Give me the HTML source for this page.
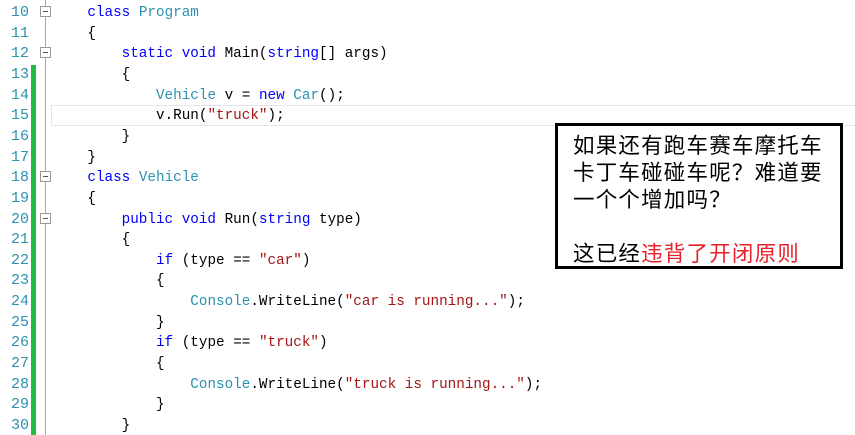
<!DOCTYPE html>
<html><head><meta charset="utf-8"><style>
body{margin:0;width:855px;height:435px;background:#fff;overflow:hidden;position:relative;font-family:"Liberation Mono",monospace;}
.ln{position:absolute;left:0;width:29px;text-align:right;color:#2b91af;font-size:15px;}
.code{position:absolute;left:53px;font-size:14.3px;white-space:pre;color:#000;}
.k{color:#0000ff}.t{color:#2b91af}.s{color:#a31515}
.fold{position:absolute;left:40px;width:9px;height:9px;border:1px solid #999;background:#fff;}
.fold:after{content:"";position:absolute;left:2px;top:4px;width:5px;height:1px;background:#555;}
</style></head><body>
<div style="position:absolute;left:31px;top:65px;width:5px;height:370px;background:#22bb44"></div>
<div style="position:absolute;left:45px;top:0;width:1px;height:435px;background:#aaa"></div>
<div style="position:absolute;left:51px;top:105px;width:804px;height:19px;border:1px solid #e4e4ec;border-right:none"></div>
<div id="g"></div>
<div style="position:absolute;left:555px;top:123px;width:282px;height:140px;border:3px solid #000;background:#fff;font-family:'Noto Sans CJK SC',sans-serif;font-size:21.5px;letter-spacing:1.2px;line-height:27px;padding:0;">
<div style="position:absolute;left:15px;top:5px;width:270px;white-space:nowrap">如果还有跑车赛车摩托车<br>卡丁车碰碰车呢？难道要<br>一个个增加吗？<br><br>这已经<span style="color:#e8202a">违背了开闭原则</span></div>
</div>
<script>
var L=[
[10,'<span class="k">class</span> <span class="t">Program</span>',1],
[11,'{'],
[12,'    <span class="k">static void</span> Main(<span class="k">string</span>[] args)',1],
[13,'    {'],
[14,'        <span class="t">Vehicle</span> v = <span class="k">new</span> <span class="t">Car</span>();'],
[15,'        v.Run(<span class="s">"truck"</span>);'],
[16,'    }'],
[17,'}'],
[18,'<span class="k">class</span> <span class="t">Vehicle</span>',1],
[19,'{'],
[20,'    <span class="k">public void</span> Run(<span class="k">string</span> type)',1],
[21,'    {'],
[22,'        <span class="k">if</span> (type == <span class="s">"car"</span>)'],
[23,'        {'],
[24,'            <span class="t">Console</span>.WriteLine(<span class="s">"car is running..."</span>);'],
[25,'        }'],
[26,'        <span class="k">if</span> (type == <span class="s">"truck"</span>)'],
[27,'        {'],
[28,'            <span class="t">Console</span>.WriteLine(<span class="s">"truck is running..."</span>);'],
[29,'        }'],
[30,'    }']];
var h='';
L.forEach(function(r,i){var y=5+i*20.65;
h+='<div class="ln" style="top:'+(y-1)+'px">'+r[0]+'</div><div class="code" style="top:'+y+'px">    '+r[1]+'</div>';
if(r[2])h+='<div class="fold" style="top:'+(y+1)+'px"></div>';});
document.getElementById('g').innerHTML=h;
</script>
</body></html>
